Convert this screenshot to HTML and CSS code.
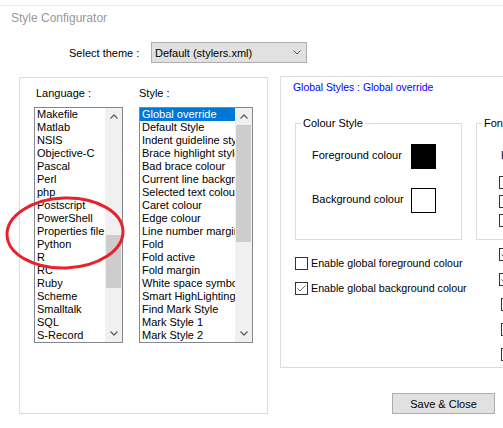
FILE: index.html
```html
<!DOCTYPE html>
<html lang="en">
<head>
    <meta charset="UTF-8">
    <meta name="viewport" content="width=device-width, initial-scale=1.0">
    <title>Style Configurator</title>
    <link rel="stylesheet" href="styles.css">
</head>
<body>

    <div class="dialog">
        <div class="caption">Style Configurator</div>

        <div class="theme-row">
            <span class="theme-label">Select theme :</span>
            <div class="combo">
                <span>Default (stylers.xml)</span>
                <svg class="combo-arrow" width="8" height="5" viewBox="0 0 8 5"><polyline points="0.5,0.5 4,4 7.5,0.5" /></svg>
            </div>
        </div>

        <div class="content">
            <!-- Language / style lists -->
            <div class="group lists-group">
                <div class="list-col lang-col">
                    <div class="list-label">Language :</div>
                    <div class="listbox">
                        <ul class="items">
                            <li>Makefile</li>
                            <li>Matlab</li>
                            <li>NSIS</li>
                            <li>Objective-C</li>
                            <li>Pascal</li>
                            <li>Perl</li>
                            <li>php</li>
                            <li>Postscript</li>
                            <li>PowerShell</li>
                            <li>Properties file</li>
                            <li>Python</li>
                            <li>R</li>
                            <li>RC</li>
                            <li>Ruby</li>
                            <li>Scheme</li>
                            <li>Smalltalk</li>
                            <li>SQL</li>
                            <li>S-Record</li>
                        </ul>
                        <div class="scrollbar">
                            <div class="arrow"><svg width="8" height="5" viewBox="0 0 8 5"><polyline points="0.5,4.5 4,1 7.5,4.5" /></svg></div>
                            <div class="track"><div class="thumb" style="margin-top: 110px; height: 53px;"></div></div>
                            <div class="arrow"><svg width="8" height="5" viewBox="0 0 8 5"><polyline points="0.5,0.5 4,4 7.5,0.5" /></svg></div>
                        </div>
                    </div>
                </div>

                <div class="list-col style-col">
                    <div class="list-label">Style :</div>
                    <div class="listbox">
                        <ul class="items">
                            <li class="selected">Global override</li>
                            <li>Default Style</li>
                            <li>Indent guideline style</li>
                            <li>Brace highlight style</li>
                            <li>Bad brace colour</li>
                            <li>Current line background colour</li>
                            <li>Selected text colour</li>
                            <li>Caret colour</li>
                            <li>Edge colour</li>
                            <li>Line number margin</li>
                            <li>Fold</li>
                            <li>Fold active</li>
                            <li>Fold margin</li>
                            <li>White space symbol</li>
                            <li>Smart HighLighting</li>
                            <li>Find Mark Style</li>
                            <li>Mark Style 1</li>
                            <li>Mark Style 2</li>
                        </ul>
                        <div class="scrollbar">
                            <div class="arrow"><svg width="8" height="5" viewBox="0 0 8 5"><polyline points="0.5,4.5 4,1 7.5,4.5" /></svg></div>
                            <div class="track"><div class="thumb" style="margin-top: 0px; height: 117px;"></div></div>
                            <div class="arrow"><svg width="8" height="5" viewBox="0 0 8 5"><polyline points="0.5,0.5 4,4 7.5,0.5" /></svg></div>
                        </div>
                    </div>
                </div>
            </div>

            <div class="right-col">
                <div class="group styles-group">
                    <div class="styles-title">Global Styles : Global override</div>

                    <div class="styles-body">
                        <div class="colour-col">
                            <fieldset class="subgroup colour-box">
                                <legend>Colour Style</legend>
                                <div class="colour-grid">
                                    <span class="colour-label">Foreground colour</span>
                                    <span class="swatch black"></span>
                                    <span class="colour-label">Background colour</span>
                                    <span class="swatch"></span>
                                </div>
                            </fieldset>
                            <div class="check-list">
                                <label class="check"><span class="box"></span>Enable global foreground colour</label>
                                <label class="check"><span class="box checked"><svg width="11" height="11" viewBox="0 0 11 11"><polyline points="1.5,5.5 4,8 9.5,2.5" /></svg></span>Enable global background colour</label>
                            </div>
                        </div>

                        <div class="font-col">
                            <fieldset class="subgroup font-box">
                                <legend>Font Style</legend>
                                <div class="font-name">Font name :</div>
                                <div class="font-checks">
                                    <label class="check"><span class="box"></span>Bold</label>
                                    <label class="check"><span class="box"></span>Italic</label>
                                    <label class="check"><span class="box"></span>Underline</label>
                                </div>
                            </fieldset>
                            <div class="check-list global-font">
                                <label class="check on"><span class="box checked"><svg width="11" height="11" viewBox="0 0 11 11"><polyline points="1.5,5.5 4,8 9.5,2.5" /></svg></span>Enable global font</label>
                                <label class="check on"><span class="box checked"><svg width="11" height="11" viewBox="0 0 11 11"><polyline points="1.5,5.5 4,8 9.5,2.5" /></svg></span>Enable global font size</label>
                                <label class="check"><span class="box"></span>Enable global bold font style</label>
                                <label class="check"><span class="box"></span>Enable global italic font style</label>
                                <label class="check"><span class="box"></span>Enable global underline font style</label>
                            </div>
                        </div>
                    </div>
                </div>

                <div class="button-row">
                    <button class="btn">Save &amp; Close</button>
                </div>
            </div>
        </div>

        <!-- red hand-drawn mark over the language list -->
        <svg class="annotation" width="132" height="86" viewBox="0 0 132 86">
            <ellipse cx="65" cy="43" rx="58" ry="35" transform="rotate(-2 65 43)" />
        </svg>
    </div>

</body>
</html>
```

FILE: styles.css
```css
body {
    margin: 0;
    font-family: 'Liberation Sans', Arial, sans-serif;
    font-size: 11px;
    color: #000;
    background-color: #fff;
    overflow: hidden;
}

.dialog {
    position: relative; /* anchor for the red annotation */
    margin-top: 5px;
    border-top: 1px solid #ececec;
    height: 422px;
}

.caption {
    padding: 5px 0 0 11px;
    font-size: 12px;
    line-height: 14px;
    color: #999;
}

.theme-row {
    display: flex;
    align-items: center;
    height: 21px;
    margin-top: 17px;
    padding-left: 69px;
}

.theme-label {
    width: 82px;
}

.combo {
    width: 156px;
    height: 21px;
    box-sizing: border-box;
    border: 1px solid #adadad;
    background-color: #e1e1e1;
    display: flex;
    align-items: center;
    justify-content: space-between;
    padding: 0 5px 0 3px;
}

.combo-arrow polyline {
    fill: none;
    stroke: #555;
    stroke-width: 1;
}

.content {
    display: flex;
    align-items: flex-start;
    margin-top: 13px;
}

.group {
    border: 1px solid #dcdcdc;
    box-sizing: border-box;
}

/* left box with the two lists */
.lists-group {
    flex-shrink: 0;
    width: 249px;
    height: 337px;
    margin: 1px 0 0 19px;
    padding: 9px 0 0 14px;
    display: flex;
    gap: 16px;
}

.lang-col {
    width: 89px;
}

.style-col {
    width: 114px;
}

.list-label {
    line-height: 13px;
    margin-bottom: 7px;
}

.lang-col .list-label {
    padding-left: 2px;
}

.listbox {
    display: flex;
    height: 236px;
    box-sizing: border-box;
    border: 1px solid #828790;
}

.items {
    list-style: none;
    margin: 0;
    padding: 0;
    flex: 1;
    min-width: 0;
    overflow: hidden;
}

.items li {
    height: 13px;
    line-height: 13px;
    padding-left: 2px;
    white-space: nowrap;
    overflow: hidden;
}

.items li.selected {
    background-color: #0078d7;
    color: #fff;
}

.scrollbar {
    width: 17px;
    background-color: #f0f0f0;
    display: flex;
    flex-direction: column;
}

.arrow {
    height: 17px;
    display: flex;
    align-items: center;
    justify-content: center;
}

.arrow polyline {
    fill: none;
    stroke: #606060;
    stroke-width: 1.3;
}

.track {
    flex: 1;
}

.thumb {
    margin-left: 1px;
    margin-right: 1px;
    background-color: #cdcdcd;
}

/* right box with the style settings */
.right-col {
    flex-shrink: 0;
    margin-left: 12px;
}

.styles-group {
    width: 240px;
    height: 292px;
    padding: 4px 0 0 12px;
}

.styles-title {
    color: #0000ff;
    font-size: 10.4px;
    line-height: 13px;
}

.styles-body {
    display: flex;
    gap: 14px;
    margin-top: 23px;
    padding-left: 2px;
}

.colour-col {
    flex-shrink: 0;
    width: 167px;
}

.font-col {
    flex-shrink: 0;
    width: 80px;
}

.subgroup {
    margin: 0;
    padding: 0 0 0 5px;
    border: 1px solid #dcdcdc;
    height: 123px;
    box-sizing: border-box;
}

.subgroup legend {
    padding: 0 2px;
    line-height: 13px;
}

.colour-grid {
    display: grid;
    grid-template-columns: 99px 25px;
    row-gap: 19px;
    margin: 14px 0 0 11px;
}

.colour-label {
    padding-top: 5px;
    line-height: 13px;
}

.swatch {
    width: 25px;
    height: 25px;
    box-sizing: border-box;
    border: 1px solid #000;
    background-color: #fff;
}

.swatch.black {
    background-color: #000;
}

.check-list {
    display: flex;
    flex-direction: column;
    gap: 12px;
    margin-top: 17px;
    font-size: 10.7px;
}

.check {
    display: flex;
    align-items: center;
    gap: 3px;
    line-height: 13px;
    white-space: nowrap;
}

.box {
    width: 13px;
    height: 13px;
    box-sizing: border-box;
    border: 1px solid #333;
    background-color: #fff;
    display: flex;
    align-items: center;
    justify-content: center;
    flex-shrink: 0;
}

.box polyline {
    fill: none;
    stroke: #666;
    stroke-width: 1;
}

.font-name {
    margin: 19px 0 0 19px;
    line-height: 13px;
    white-space: nowrap;
}

.font-checks {
    display: flex;
    flex-direction: column;
    gap: 6px;
    margin: 14px 0 0 17px;
}

.global-font {
    margin-top: 8px;
    padding-left: 25px;
}

.global-font .check.on {
    margin-left: -2px;
}

.button-row {
    margin: 25px 0 0 112px;
}

.btn {
    width: 103px;
    height: 21px;
    padding: 0;
    border: 1px solid #adadad;
    background-color: #e1e1e1;
    font-family: inherit;
    font-size: 11px;
    color: #000;
}

.annotation {
    position: absolute;
    left: 0;
    top: 184px;
    pointer-events: none;
}

.annotation ellipse {
    fill: none;
    stroke: #e8212b;
    stroke-width: 3;
}
```
